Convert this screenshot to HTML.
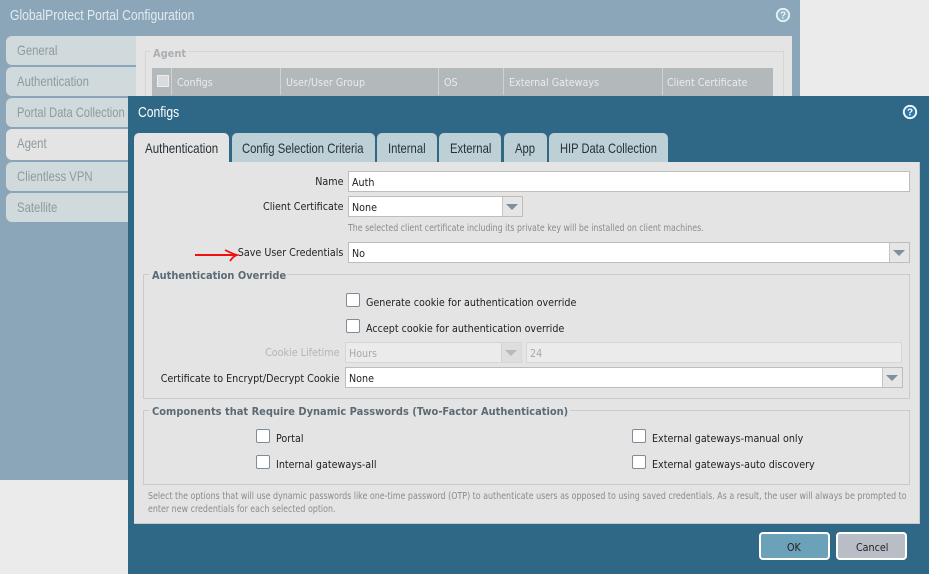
<!DOCTYPE html>
<html><head><meta charset="utf-8">
<style>
html,body{margin:0;padding:0;width:929px;height:574px;overflow:hidden;background:#ebebeb}
div,span{position:absolute;box-sizing:border-box}
.t{font:11px "DejaVu Sans",sans-serif;white-space:nowrap;transform:scaleX(.87);transform-origin:0 0;color:#222;line-height:14px;margin-top:1px}
.r{transform-origin:100% 0;text-align:right}
.b{font-weight:bold;color:#5b6a75;transform:scaleX(.895);margin-top:0}
.n{font:14px "Liberation Sans",sans-serif;white-space:nowrap;transform:scaleX(.81);transform-origin:0 0;line-height:16px}
.side{left:6px;width:130px;height:29px;background:#d0dadd;border-radius:6px 0 0 6px}
.sl{left:17px;color:#8f9a9f}
.tab{top:133px;height:29px;background:#bdd0d6;border-radius:5px 5px 0 0}
.tl{top:140px;color:#263238;transform:scaleX(.805)}
.ttl{font-size:15px;transform:scaleX(.81)}
.in{background:#fff;border:1px solid #bdbdbd}
.sep{top:0;bottom:0;width:20px;border-left:1px solid #c4c4c4;background:#e6e6e6}
.tri{width:0;height:0;border-left:6px solid transparent;border-right:6px solid transparent;border-top:6px solid #7f8e98}
.cb{width:14px;height:14px;background:#fff;border:1px solid #7e8c98;border-radius:2px}
.fs{border:1px solid #cbcbcb}
.hs{color:#8b8b8b;font-size:10px;transform:scaleX(.785)}
.th{top:75px;color:#e9ecee}
.col{top:68px;width:1px;height:27px;background:#cfd3d5}
</style></head>
<body>
<div style="left:0;top:0;width:800px;height:480px;background:#8aa6b8"></div>
<div class="n ttl" style="left:10px;top:8px;color:#e3ebef">GlobalProtect Portal Configuration</div>
<svg style="position:absolute;left:775px;top:7px" width="16" height="16"><circle cx="8" cy="8" r="6.2" fill="#8fb3c7" stroke="#e8eff3" stroke-width="1.9"/><text x="8" y="11.5" text-anchor="middle" font-family="Liberation Sans" font-weight="bold" font-size="10" fill="#eef4f7">?</text></svg>

<div style="left:136px;top:36px;width:656px;height:444px;background:#e4e4e4"></div>
<div class="side" style="top:36px"></div><div class="side" style="top:67px"></div><div class="side" style="top:98px"></div>
<div class="side" style="top:129px;height:31px;background:#e4e4e4"></div><div class="side" style="top:162px"></div><div class="side" style="top:193px"></div>
<div class="n sl" style="top:42px">General</div>
<div class="n sl" style="top:73px">Authentication</div>
<div class="n sl" style="top:104px;transform:scaleX(.795)">Portal Data Collection</div>
<div class="n sl" style="top:135px">Agent</div>
<div class="n sl" style="top:168px">Clientless VPN</div>
<div class="n sl" style="top:199px">Satellite</div>

<div class="fs" style="left:145px;top:51px;width:639px;height:200px;border-color:#d6d6d6"></div>
<div style="left:150px;top:48px;width:38px;height:10px;background:#e4e4e4"></div>
<div class="t b" style="left:153px;top:47px;color:#a9afb3">Agent</div>
<div style="left:152px;top:68px;width:621px;height:28px;background:#b3b8ba"></div>
<div style="left:157px;top:75px;width:12px;height:12px;background:#d9dbdc;border:1px solid #eee"></div>
<div class="col" style="left:171px"></div><div class="col" style="left:280px"></div><div class="col" style="left:438px"></div><div class="col" style="left:503px"></div><div class="col" style="left:662px"></div>
<div class="t th" style="left:177px">Configs</div>
<div class="t th" style="left:286px">User/User Group</div>
<div class="t th" style="left:444px">OS</div>
<div class="t th" style="left:509px">External Gateways</div>
<div class="t th" style="left:667px">Client Certificate</div>

<div style="left:128px;top:96px;width:801px;height:478px;background:#2f6887"></div>
<div class="n ttl" style="left:138px;top:105px;color:#fff">Configs</div>
<svg style="position:absolute;left:902px;top:104px" width="16" height="16"><circle cx="8" cy="8" r="6.2" fill="#2a78ac" stroke="#f2f6f8" stroke-width="1.9"/><text x="8" y="11.5" text-anchor="middle" font-family="Liberation Sans" font-weight="bold" font-size="10" fill="#fff">?</text></svg>

<div class="tab" style="left:134px;width:95px;background:#e4e4e4"></div>
<div class="tab" style="left:232px;width:143px"></div>
<div class="tab" style="left:377px;width:60px"></div>
<div class="tab" style="left:439px;width:62px"></div>
<div class="tab" style="left:504px;width:43px"></div>
<div class="tab" style="left:549px;width:119px"></div>
<div class="n tl" style="left:145px;transform:scaleX(.825)">Authentication</div>
<div class="n tl" style="left:242px">Config Selection Criteria</div>
<div class="n tl" style="left:388px">Internal</div>
<div class="n tl" style="left:450px">External</div>
<div class="n tl" style="left:515px">App</div>
<div class="n tl" style="left:560px;transform:scaleX(.795)">HIP Data Collection</div>

<div style="left:134px;top:162px;width:786px;height:362px;background:#e4e4e4;border-right:1px solid #c9c9c9;border-bottom:1px solid #c9c9c9"></div>

<div class="t r" style="right:586px;top:174px">Name</div>
<div class="in" style="left:348px;top:171px;width:562px;height:21px"></div>
<div class="t" style="left:352px;top:175px">Auth</div>

<div class="t r" style="right:586px;top:199px">Client Certificate</div>
<div class="in" style="left:348px;top:196px;width:175px;height:21px"><div class="sep" style="right:0"><div class="tri" style="left:3px;top:7px"></div></div></div>
<div class="t" style="left:352px;top:200px">None</div>
<div class="t hs" style="left:348px;top:221px">The selected client certificate including its private key will be installed on client machines.</div>

<div class="t r" style="right:586px;top:245px">Save User Credentials</div>
<div class="in" style="left:348px;top:242px;width:562px;height:21px"><div class="sep" style="right:0"><div class="tri" style="left:3px;top:7px"></div></div></div>
<div class="t" style="left:352px;top:246px">No</div>
<svg style="position:absolute;left:190px;top:245px" width="50" height="18"><path d="M5 10H47" stroke="#f01010" stroke-width="2" fill="none"/><path d="M35 5C39 7 43 9 47 10C44 11 42 13 40 16" stroke="#f01010" stroke-width="1.8" fill="none"/></svg>

<div class="fs" style="left:143px;top:274px;width:767px;height:125px"></div>
<div style="left:149px;top:270px;width:138px;height:10px;background:#e4e4e4"></div>
<div class="t b" style="left:152px;top:269px">Authentication Override</div>
<div class="cb" style="left:346px;top:293px"></div>
<div class="t" style="left:366px;top:295px">Generate cookie for authentication override</div>
<div class="cb" style="left:346px;top:319px"></div>
<div class="t" style="left:366px;top:321px">Accept cookie for authentication override</div>
<div class="t r" style="right:589px;top:345px;color:#b4b4b4">Cookie Lifetime</div>
<div class="in" style="left:345px;top:342px;width:177px;height:21px;background:#ebebeb;border-color:#d6d6d6"><div class="sep" style="right:0;background:#dedede;border-color:#d4d4d4"><div class="tri" style="left:3px;top:7px;border-top-color:#b4bbc0"></div></div></div>
<div class="t" style="left:349px;top:346px;color:#a8a8a8">Hours</div>
<div class="in" style="left:526px;top:342px;width:376px;height:21px;background:#ebebeb;border-color:#d6d6d6"></div>
<div class="t" style="left:530px;top:346px;color:#a8a8a8">24</div>
<div class="t r" style="right:589px;top:371px">Certificate to Encrypt/Decrypt Cookie</div>
<div class="in" style="left:345px;top:367px;width:558px;height:21px"><div class="sep" style="right:0"><div class="tri" style="left:3px;top:7px"></div></div></div>
<div class="t" style="left:349px;top:371px">None</div>

<div class="fs" style="left:143px;top:410px;width:767px;height:75px"></div>
<div style="left:149px;top:406px;width:421px;height:10px;background:#e4e4e4"></div>
<div class="t b" style="left:152px;top:405px;transform:scaleX(.898)">Components that Require Dynamic Passwords (Two-Factor Authentication)</div>
<div class="cb" style="left:256px;top:429px"></div>
<div class="t" style="left:276px;top:431px">Portal</div>
<div class="cb" style="left:256px;top:455px"></div>
<div class="t" style="left:276px;top:457px">Internal gateways-all</div>
<div class="cb" style="left:632px;top:429px"></div>
<div class="t" style="left:652px;top:431px">External gateways-manual only</div>
<div class="cb" style="left:632px;top:455px"></div>
<div class="t" style="left:652px;top:457px">External gateways-auto discovery</div>
<div class="t hs" style="left:148px;top:489px;transform:scaleX(.793)">Select the options that will use dynamic passwords like one-time password (OTP) to authenticate users as opposed to using saved credentials. As a result, the user will always be prompted to</div>
<div class="t hs" style="left:148px;top:502px;transform:scaleX(.793)">enter new credentials for each selected option.</div>

<div style="left:759px;top:532px;width:71px;height:28px;background:#6ba1b9;border:2px solid #fff;border-radius:4px"></div>
<div class="t" style="left:787px;top:540px">OK</div>
<div style="left:836px;top:532px;width:71px;height:28px;background:#b9bdc5;border:2px solid #fff;border-radius:4px"></div>
<div class="t" style="left:856px;top:540px">Cancel</div>
</body></html>
